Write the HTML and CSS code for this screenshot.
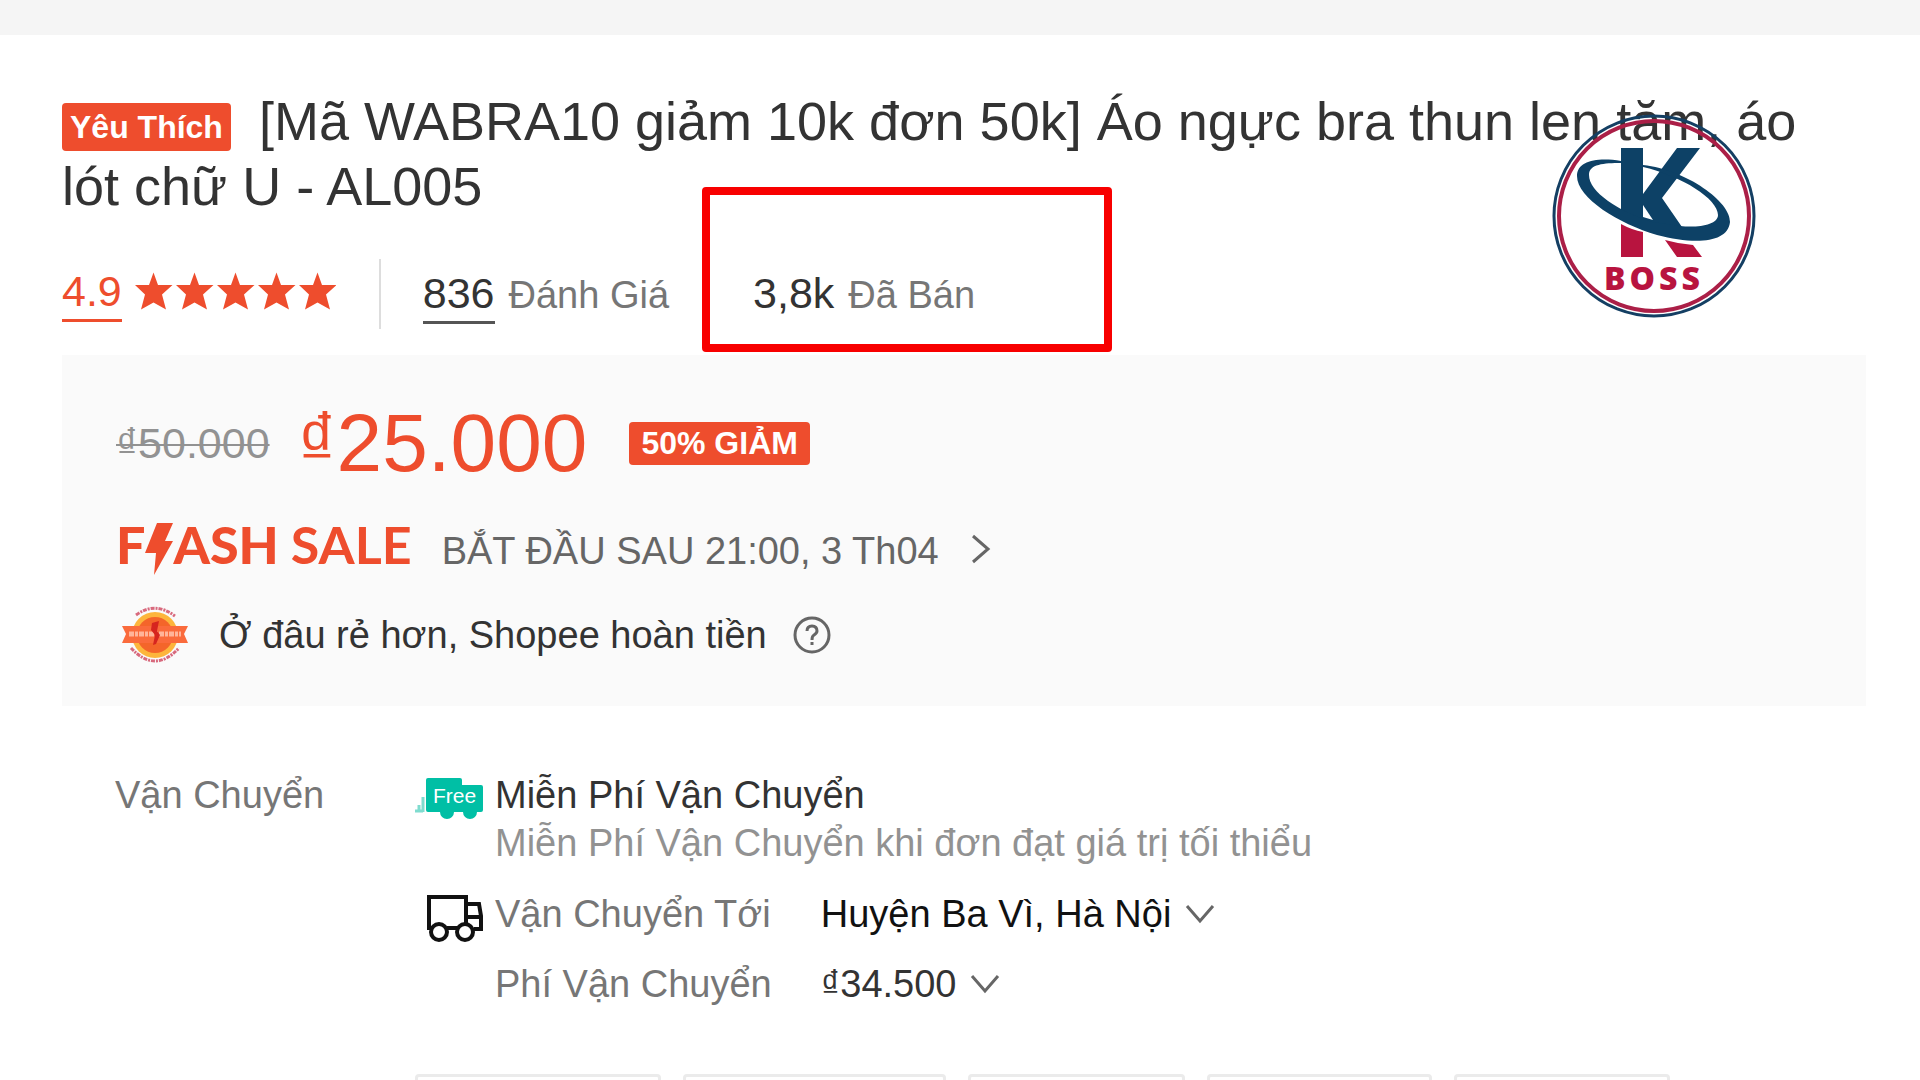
FILE: index.html
```html
<!DOCTYPE html>
<html lang="vi">
<head>
    <meta charset="UTF-8">
    <title>Áo ngực bra thun len tăm</title>
    <link rel="stylesheet" href="styles.css">
</head>
<body>
<div class="top-band"></div>
<main class="product">
    <h1 class="title"><span class="tag">Yêu Thích</span>[Mã WABRA10 giảm 10k đơn 50k] Áo ngực bra thun len tăm, áo lót chữ U - AL005</h1>

    <div class="stats">
        <a href="#rating" class="rating">4.9</a>
        <svg class="stars" viewBox="0 0 201 38" aria-label="5 sao">
            <defs>
                <path id="star" d="M18.500 0.500L23 13H37.500L27 22.500L31 37.500L18.500 30.500L6 37.500L10 22.500L0 13H14z"/>
            </defs>
            <use href="#star"/>
            <use href="#star" x="41"/>
            <use href="#star" x="82"/>
            <use href="#star" x="123"/>
            <use href="#star" x="164"/>
        </svg>
        <a href="#reviews" class="reviews"><span class="count">836</span><span class="caption">Đánh Giá</span></a>
        <div class="sold"><span class="number">3,8k</span><span class="caption">Đã Bán</span></div>
    </div>

    <section class="offer">
        <div class="prices">
            <del class="old-price">₫50.000</del>
            <div class="price"><span class="currency">₫</span>25.000</div>
            <span class="discount">50% GIẢM</span>
        </div>
        <a href="#flash-sale" class="flash">
            <span class="flash-logo">
                <span class="heavy">F</span>
                <svg class="bolt" viewBox="0 0 28 52"><path d="M12 0H28L20 18H28L9 52L11 30H0z"/></svg>
                <span class="heavy">ASH</span>
                <span class="sale">SALE</span>
            </span>
            <span>BẮT ĐẦU SAU 21:00, 3 Th04</span>
            <svg class="next" viewBox="0 0 20 30"><path d="M2 2L17 15L2 28"/></svg>
        </a>
        <div class="guarantee">
            <svg class="seal" viewBox="0 0 68 58">
                <circle cx="34" cy="29" r="23" fill="#fdb53c"/>
                <circle cx="34" cy="29" r="18" fill="#f4652a"/>
                <path d="M15 9Q34-5 54 10" fill="none" stroke="#d8697d" stroke-width="3" stroke-dasharray="4 1 2 1"/>
                <path d="M10 42Q34 68 58 42" fill="none" stroke="#d8697d" stroke-width="3" stroke-dasharray="4 1 2 1"/>
                <path d="M1 20H67L63 28L67 37H1L5 28z" fill="#fa6b3c"/>
                <path d="M8 28H60" stroke="#ffb59a" stroke-width="5" stroke-dasharray="5 1 3 1"/>
                <path d="M31 17L38 15L36 25L39 29L35 38L32 39L34 29L30 24z" fill="#d6251f"/>
            </svg>
            <span>Ở đâu rẻ hơn, Shopee hoàn tiền</span>
            <svg class="help" viewBox="0 0 38 38">
                <circle cx="19" cy="19" r="17"/>
                <path d="M14 15Q14 10 19 10Q24 10 24 15Q24 17 21 19Q19 20 19 24M19 26V29"/>
            </svg>
        </div>
    </section>

    <section class="shipping">
        <h2 class="label">Vận Chuyển</h2>
        <div class="methods">
            <svg class="free-icon" viewBox="0 0 68 42">
                <path d="M13 1H45Q47 1 47 3V8H66Q68 8 68 10V33Q68 35 66 35H62A7 7 0 0 1 48 35H39A7 7 0 0 1 25 35H13Q11 35 11 33V3Q11 1 13 1z" fill="#00bfa5"/>
                <path d="M8 20V35M4 28V35M0 34H8" stroke="#7fdccf" stroke-width="3" fill="none"/>
                <text x="18" y="26" class="free-text">Free</text>
            </svg>
            <div class="free">
                <div>Miễn Phí Vận Chuyển</div>
                <div class="note">Miễn Phí Vận Chuyển khi đơn đạt giá trị tối thiểu</div>
            </div>
            <svg class="truck" viewBox="0 0 56 48">
                <path d="M5 34H2V3H39V34H20M30 34H20M39 10H52L54 22V35H47M39 23H54"/>
                <circle cx="12" cy="38" r="8" fill="#fff"/>
                <circle cx="38" cy="38" r="8" fill="#fff"/>
            </svg>
            <span class="caption">Vận Chuyển Tới</span>
            <button class="picker place">Huyện Ba Vì, Hà Nội
                <svg class="down" viewBox="0 0 30 20"><path d="M2 2L15 17L28 2"/></svg>
            </button>
            <span class="caption fee">Phí Vận Chuyển</span>
            <button class="picker cost">₫34.500
                <svg class="down" viewBox="0 0 30 20"><path d="M2 2L15 17L28 2"/></svg>
            </button>
        </div>
    </section>

    <div class="variants">
        <button class="variant" aria-label="1"></button>
        <button class="variant" aria-label="2"></button>
        <button class="variant" aria-label="3"></button>
        <button class="variant" aria-label="4"></button>
        <button class="variant" aria-label="5"></button>
    </div>
</main>

<svg class="kboss" viewBox="0 0 204 204">
    <circle cx="102" cy="102" r="100" fill="none" stroke="#143f63" stroke-width="3"/>
    <circle cx="102" cy="102" r="95" fill="none" stroke="#ab1f47" stroke-width="4"/>
    <path d="M69 34H91V80L125 34H148L110 84L130 113L91 108L69 96z" fill="#0d4166"/>
    <path d="M91 91V103L101 106z" fill="#fff"/>
    <path fill-rule="evenodd" fill="#0d4166" d="M69 47C45 43 25 47 25 62C25 84 67 110 105 121C143 131 176 129 178 108C179 88 135 56 91 51V53C130 62 166 85 166 101C166 111 146 114 128 112L100 108C66 97 37 78 37 61C37 50 52 49 69 49z"/>
    <path d="M69 110Q80 116 91 118V143H69zM113 126Q127 130 141 131L150 143H125z" fill="#b8143f"/>
    <text x="52" y="176" class="kboss-name">BOSS</text>
</svg>
</body>
</html>
```

FILE: styles.css
```css
html, body {
    height: 100%;
    margin: 0;
    overflow: hidden;
}

body {
    position: relative;
    background: #fff;
    color: #333;
    font: 38px/48px "Liberation Sans", Arial, sans-serif;
}

a {
    color: inherit;
    text-decoration: none;
}

svg {
    flex: none;
}

.top-band {
    height: 35px;
    background: #f5f5f5;
}

.product {
    padding: 54px 54px 0 62px;
}

.title {
    margin: 0;
    font-size: 54px;
    font-weight: 400;
    line-height: 65px;
}

.tag, .discount {
    background: #ee4d2d;
    color: #fff;
    font-size: 32px;
    font-weight: 700;
    border-radius: 4px;
}

.tag {
    display: inline-block;
    padding: 0 8px;
    margin-right: 28px;
    line-height: 48px;
    vertical-align: 2px;
}

.caption {
    color: #767676;
}

.stats {
    display: flex;
    align-items: center;
    height: 68px;
    margin: 41px 0 27px;
}

.rating, .count {
    padding-bottom: 4px;
    font-size: 43px;
    border-bottom: 3px solid #555;
}

.rating {
    color: #ee4d2d;
    border-color: #ee4d2d;
}

.stars {
    width: 201px;
    height: 38px;
    margin: 0 43px 6px 13px;
    fill: #ee4d2d;
}

.reviews {
    padding: 10px 33px 10px 42px;
    border-left: 2px solid #ddd;
}

.reviews .caption, .sold .caption {
    margin-left: 14px;
}

/* highlighted sales counter */
.sold {
    box-sizing: border-box;
    align-self: flex-end;
    width: 410px;
    height: 165px;
    padding: 74px 43px 0;
    margin-bottom: -24px;
    border: 8px solid #f80000;
    border-radius: 4px;
}

.sold .number {
    font-size: 43px;
}

.offer {
    display: flex;
    flex-direction: column;
    padding: 40px 54px 35px;
    background: #fafafa;
}

.prices, .guarantee {
    display: flex;
    align-items: center;
}

.prices {
    height: 96px;
}

.old-price {
    color: #929292;
    font-size: 43px;
    text-decoration-thickness: 2px;
}

.price {
    display: flex;
    margin: 0 42px 0 28px;
    color: #ee4d2d;
    font-size: 82px;
    line-height: 96px;
}

.currency {
    font-size: 76px;
    line-height: 90px;
}

.discount {
    padding: 0 12px;
    line-height: 43px;
}

.flash {
    display: flex;
    align-items: baseline;
    height: 63px;
    margin-top: 29px;
    color: #666;
}

.flash-logo {
    display: flex;
    align-items: baseline;
    margin-right: 30px;
    color: #ee4d2d;
    font-family: Lato, sans-serif;
    font-size: 52px;
    font-weight: 700;
}

.heavy {
    font-weight: 900;
}

.bolt {
    align-self: flex-start;
    width: 28px;
    height: 52px;
    margin-top: 3px;
    fill: #ee4d2d;
}

.sale {
    margin-left: 12px;
}

.next, .down, .help, .truck {
    fill: none;
    stroke: #666;
    stroke-width: 3px;
}

.next {
    width: 20px;
    height: 30px;
    margin-left: 32px;
}

.guarantee {
    height: 72px;
    margin-top: 16px;
}

.seal {
    width: 68px;
    height: 58px;
    margin: 0 30px 0 5px;
}

.help {
    width: 38px;
    height: 38px;
    margin-left: 26px;
}

.shipping {
    display: grid;
    grid-template-columns: 300px 1fr;
    padding: 65px 0 0 53px;
}

.label {
    margin: 0;
    color: #767676;
    font-size: 38px;
    font-weight: 400;
}

.methods {
    display: grid;
    grid-template-columns: 68px auto 1fr;
    column-gap: 12px;
    align-items: center;
    justify-items: start;
}

.methods .caption {
    white-space: nowrap;
}

.free {
    grid-column: 2 / 4;
    padding-bottom: 12px;
}

.note {
    color: #929292;
}

.free-icon {
    width: 68px;
    height: 42px;
    align-self: start;
    margin-top: 6px;
}

.free-text {
    fill: #fff;
    font-size: 21px;
}

.truck {
    width: 56px;
    height: 48px;
    justify-self: end;
    margin-top: 8px;
    stroke: #111;
    stroke-width: 4px;
}

.fee {
    grid-column: 2;
}

.picker {
    display: flex;
    align-items: center;
    gap: 14px;
    padding: 0;
    margin-left: 37px;
    border: 0;
    background: none;
    color: #333;
    font: inherit;
    line-height: 70px;
    cursor: pointer;
}

.place {
    color: #111;
}

.down {
    width: 30px;
    height: 20px;
}

.variants {
    display: grid;
    grid-template-columns: 246fr 263fr 216fr 225fr 216fr;
    gap: 22px;
    padding: 55px 196px 0 353px;
}

.variant {
    height: 90px;
    border: 3px solid #ebebeb;
    border-radius: 4px;
    background: #fff;
}

/* watermark over the title */
.kboss {
    position: absolute;
    top: 114px;
    right: 164px;
    width: 204px;
    height: 204px;
}

.kboss-name {
    fill: #b8143f;
    font: 800 32px "Open Sans", sans-serif;
    letter-spacing: 4px;
}
```
